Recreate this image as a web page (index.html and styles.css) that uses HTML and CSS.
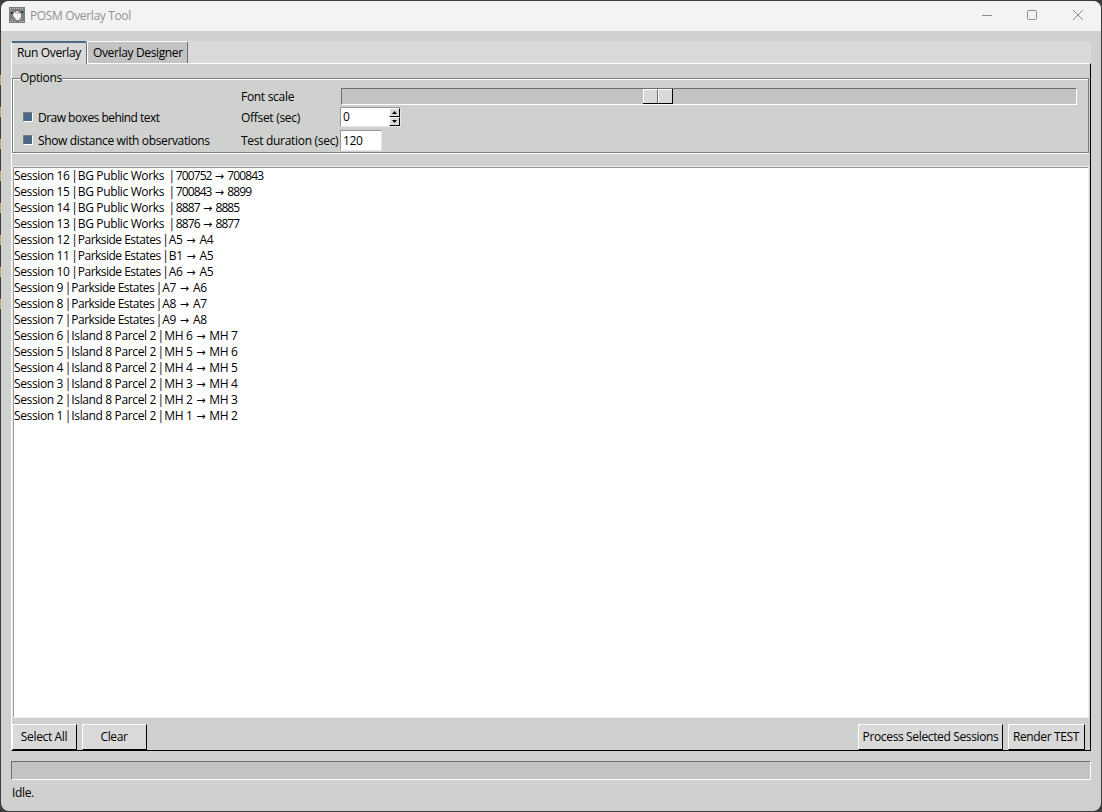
FILE: index.html
```html
<!DOCTYPE html>
<html lang="en">
<head>
    <meta charset="UTF-8">
    <meta name="viewport" content="width=device-width, initial-scale=1.0">
    <title>POSM Overlay Tool</title>
    <link rel="stylesheet" href="styles.css">
</head>
<body>
    <div class="window">
        <!-- Title bar -->
        <header class="titlebar">
            <svg class="app-icon" width="16" height="16" viewBox="0 0 16 16">
                <rect width="16" height="16" fill="#7c7c7c"/>
                <path d="M1 1.5h14M1 14.5h5M10 14.5h5" stroke="#c4c4c4" stroke-dasharray="1 1"/>
                <path d="M1 3.5h3M12 3.5h3M2 12.5h3M11 12.5h3" stroke="#a8a8a8" stroke-dasharray="2 1"/>
                <path d="M5 5l2 1 0-2 2 0 1 2 2 1 0 3-2 3-3 0-1-2-2-2z" fill="#f2f2f2"/>
                <path d="M8 4v3M10 5v2" stroke="#a0a0a0" stroke-width=".7"/>
                <path d="M2 6h2M12 5h2" stroke="#222" stroke-width="2"/>
                <path d="M3 6.5h1" stroke="#c33"/>
                <path d="M12 5.5h1" stroke="#296"/>
            </svg>
            <span class="title">POSM Overlay Tool</span>
            <div class="window-buttons">
                <svg width="12" height="12" viewBox="0 0 12 12"><path d="M2 6.5h10"/></svg>
                <svg width="12" height="12" viewBox="0 0 12 12"><rect x="1.5" y="1.5" width="9" height="9" rx="1"/></svg>
                <svg width="12" height="12" viewBox="0 0 12 12"><path d="M1 1l10 10M11 1L1 11"/></svg>
            </div>
        </header>

        <main class="content">
            <nav class="tabs">
                <div class="tab active">Run Overlay</div>
                <div class="tab">Overlay Designer</div>
            </nav>

            <section class="pane">
                <fieldset class="options">
                    <legend>Options</legend>
                    <div class="option-row">
                        <span class="option-label">Font scale</span>
                        <div class="scale"><div class="thumb"><i></i><i></i></div></div>
                    </div>
                    <div class="option-row offset-row">
                        <label class="check"><i class="box"></i><span class="tight">Draw boxes behind text</span></label>
                        <span class="option-label">Offset (sec)</span>
                        <div class="spinbox">
                            <span>0</span>
                            <div class="arrows">
                                <i><svg width="5" height="3" viewBox="0 0 5 3"><path d="M0 3L2.5 0 5 3z"/></svg></i>
                                <i><svg width="5" height="3" viewBox="0 0 5 3"><path d="M0 0l2.5 3L5 0z"/></svg></i>
                            </div>
                        </div>
                    </div>
                    <div class="option-row duration-row">
                        <label class="check"><i class="box"></i><span>Show distance with observations</span></label>
                        <span class="option-label">Test duration (sec)</span>
                        <div class="entry">120</div>
                    </div>
                </fieldset>

                <!-- Sessions -->
                <ul class="sessions">
                    <li>Session 16<i> | </i>BG Public Works&nbsp;<i> | </i><span class="num">700752 <b>→</b> 700843</span></li>
                    <li>Session 15<i> | </i>BG Public Works&nbsp;<i> | </i><span class="num">700843 <b>→</b> 8899</span></li>
                    <li>Session 14<i> | </i>BG Public Works&nbsp;<i> | </i><span class="num">8887 <b>→</b> 8885</span></li>
                    <li>Session 13<i> | </i>BG Public Works&nbsp;<i> | </i><span class="num">8876 <b>→</b> 8877</span></li>
                    <li>Session 12<i> | </i><span class="tight">Parkside Estates</span><i> | </i>A5 <b>→</b> A4</li>
                    <li>Session 11<i> | </i><span class="tight">Parkside Estates</span><i> | </i>B1 <b>→</b> A5</li>
                    <li>Session 10<i> | </i><span class="tight">Parkside Estates</span><i> | </i>A6 <b>→</b> A5</li>
                    <li>Session 9<i> | </i><span class="tight">Parkside Estates</span><i> | </i>A7 <b>→</b> A6</li>
                    <li>Session 8<i> | </i><span class="tight">Parkside Estates</span><i> | </i>A8 <b>→</b> A7</li>
                    <li>Session 7<i> | </i><span class="tight">Parkside Estates</span><i> | </i>A9 <b>→</b> A8</li>
                    <li>Session 6<i> | </i>Island 8 Parcel 2<i> | </i>MH 6 <b>→</b> MH 7</li>
                    <li>Session 5<i> | </i>Island 8 Parcel 2<i> | </i>MH 5 <b>→</b> MH 6</li>
                    <li>Session 4<i> | </i>Island 8 Parcel 2<i> | </i>MH 4 <b>→</b> MH 5</li>
                    <li>Session 3<i> | </i>Island 8 Parcel 2<i> | </i>MH 3 <b>→</b> MH 4</li>
                    <li>Session 2<i> | </i>Island 8 Parcel 2<i> | </i>MH 2 <b>→</b> MH 3</li>
                    <li>Session 1<i> | </i>Island 8 Parcel 2<i> | </i>MH 1 <b>→</b> MH 2</li>
                </ul>

                <div class="actions">
                    <button class="btn-select">Select All</button>
                    <button class="btn-clear">Clear</button>
                    <button class="btn-process">Process Selected Sessions</button>
                    <button class="btn-render">Render TEST</button>
                </div>
            </section>

            <div class="progress"></div>
            <div class="status">Idle.</div>
        </main>
    </div>
</body>
</html>
```
FILE: styles.css
```css
* {
    box-sizing: border-box;
}

body {
    margin: 0;
    padding: 1px;
    width: 1102px;
    height: 812px;
    overflow: hidden;
    /* desktop showing at the left edge */
    background: repeating-linear-gradient(#c2a561 0 10px, #3c3c3c 10px 32px) 0 75px / 1px 235px no-repeat #3c3c3c;
    font-family: "Open Sans", "Noto Sans", sans-serif;
    font-size: 12px;
    line-height: 16px;
    letter-spacing: -0.36px;
    color: #000;
}

.window {
    display: flex;
    flex-direction: column;
    height: 810px;
    border-radius: 8px;
    overflow: hidden;
    background: #cfd1ce;
}

.titlebar {
    display: flex;
    align-items: center;
    height: 30px;
    padding-left: 8px;
    background: #f3f3f3;
    color: #919191;
}

.app-icon {
    margin: 0 5px 2px 0;
}

.window-buttons {
    display: flex;
    gap: 34px;
    margin: 0 17px 2px auto;
}

.window-buttons svg {
    fill: none;
    stroke: #8c8c8c;
}

.content {
    display: flex;
    flex-direction: column;
    flex: 1;
    padding: 10px 10px 0;
}

/* Notebook */
.tabs {
    display: flex;
    height: 22px;
    background: #d9d9d9;
}

.tab {
    width: 101px;
    height: 22px;
    padding: 3px 0 0 5px;
    background: #c3c3c3;
    border: 1px solid #fff;
    border-right-color: #6f6f6f;
    border-bottom: 0;
    border-radius: 2px 2px 0 0;
    white-space: nowrap;
}

.tab.active {
    width: 76px;
    height: 23px;
    padding-top: 2px;
    background: #d9d9d9;
    border-top: 2px solid #4a6984;
    z-index: 1;
}

.pane {
    display: flex;
    flex-direction: column;
    height: 688px;
    border: 1px solid #fff;
    border-right-color: #000;
    border-bottom-color: #000;
}

.options {
    position: relative;
    height: 75px;
    margin: 14px 1px 0 0;
    padding: 8px 10px 0;
    border: 1px solid #7b7d7b;
    box-shadow: inset 1px 1px #fff, 0 1px #fff;
}

.options legend {
    position: absolute;
    top: -9px;
    left: 7px;
    padding: 0;
    background: #cfd1ce;
}

.option-row {
    display: flex;
    align-items: center;
    height: 20px;
}

.option-label {
    width: 100px;
    letter-spacing: -0.3px;
    white-space: nowrap;
}

.option-row > .option-label:first-child {
    margin-left: 218px;
}

.scale {
    width: 736px;
    height: 17px;
    margin-bottom: 2px;
    padding-left: 301px;
    background: #c3c3c3;
    border: 1px solid #fff;
    border-top-color: #6f6f6f;
    border-left-color: #6f6f6f;
}

.thumb {
    display: flex;
    width: 30px;
    height: 15px;
    border-right: 1px solid #000;
    border-bottom: 1px solid #000;
}

.thumb i {
    flex: 1;
    background: #d9d9d9;
    border-left: 1px solid #fff;
    border-top: 1px solid #fff;
}

.thumb i:first-child {
    border-right: 1px solid #6f6f6f;
}

.offset-row {
    height: 22px;
}

.duration-row {
    height: 24px;
}

.check {
    display: flex;
    align-items: center;
    width: 218px;
}

.box {
    width: 10px;
    height: 10px;
    margin: 0 5px 2px 0;
    background: #4a6984;
    border: 1px solid #fff;
    border-top-color: #7b7b7b;
    border-left-color: #7b7b7b;
}

.tight {
    letter-spacing: -0.52px;
}

.spinbox,
.entry {
    margin: 0 0 2px -1px;
    background: #fff;
    border: 1px solid #e6e6e6;
    border-top-color: #979797;
    border-left-color: #979797;
}

.spinbox {
    display: flex;
    justify-content: space-between;
    width: 61px;
    height: 20px;
    padding-left: 2px;
}

.spinbox span {
    padding-top: 1px;
}

.arrows {
    width: 11px;
    height: 18px;
}

.arrows i {
    display: flex;
    align-items: center;
    justify-content: center;
    height: 9px;
    background: #d9d9d9;
    border: 1px solid #fff;
    border-right-color: #000;
    border-bottom-color: #000;
}

.entry {
    width: 42px;
    height: 21px;
    padding: 2px;
}

.sessions {
    height: 552px;
    margin: 13px 1px 0 0;
    padding: 0;
    list-style: none;
    background: #fff;
    border: 1px solid #eee;
    box-shadow: inset 1px 1px #979797;
}

.sessions li {
    height: 16px;
    padding: 1px 0 0 1px;
}

.sessions i {
    font-style: normal;
    letter-spacing: -1.55px;
}

.sessions b {
    margin: 0 1.5px 0 1px;
    font-weight: normal;
    font-size: 11px;
    font-family: "DejaVu Sans", sans-serif;
}

.sessions .num {
    margin-left: 0.8px;
    letter-spacing: -0.9px;
}

.sessions .num b {
    margin: 0 2px 0 1px;
}

.actions {
    display: flex;
    margin-top: 6px;
    padding-right: 5px;
}

.actions button {
    height: 26px;
    padding: 0 1px 0 0;
    font: inherit;
    letter-spacing: -0.36px;
    background: #d9d9d9;
    border: 1px solid #fff;
    border-right-color: #000;
    border-bottom-color: #000;
    white-space: nowrap;
}

.actions .btn-select {
    width: 65px;
}

.actions .btn-clear {
    width: 65px;
    margin-left: 5px;
}

.actions .btn-process {
    width: 145px;
    margin-left: auto;
    padding: 0;
}

.actions .btn-render {
    width: 77px;
    margin-left: 5px;
}

.progress {
    height: 19px;
    margin-top: 10px;
    background: #c3c3c3;
    border: 1px solid #fff;
    border-top-color: #6f6f6f;
    border-left-color: #6f6f6f;
}

.status {
    margin: 5px 0 0 1px;
}
```
